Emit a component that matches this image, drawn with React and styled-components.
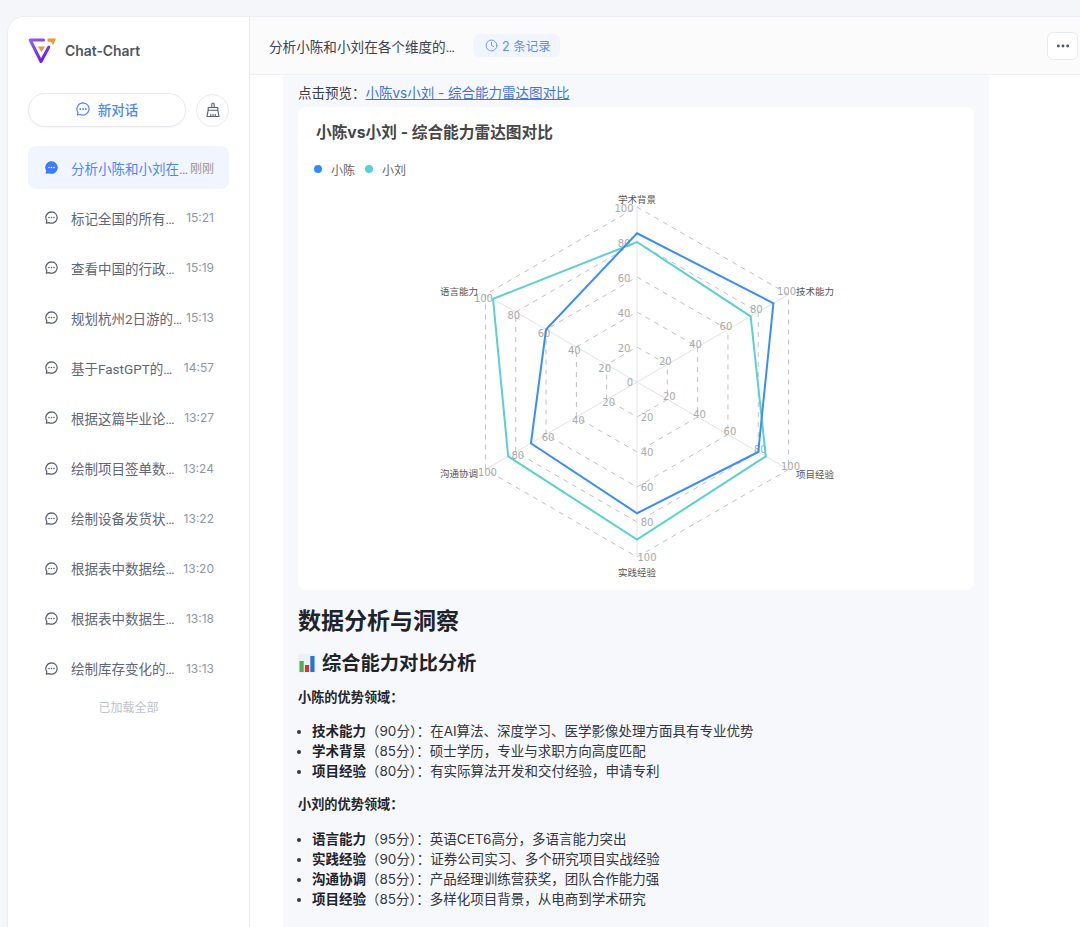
import React from 'react'
import styled, { createGlobalStyle } from 'styled-components'
import { Clock, MoreHorizontal } from 'lucide-react'

const GlobalStyle = createGlobalStyle`
  html, body {
    margin: 0;
    height: 927px;
    overflow: hidden;
    background: #f4f6f9;
    font-family: Inter, "Noto Sans CJK SC", "Noto Sans", sans-serif;
  }
`

const Page = styled.div`
  padding: 17px 0 0 8px;
`

const Shell = styled.div`
  display: flex;
  height: 920px;
  background: #fff;
  border-top-left-radius: 16px;
  box-shadow: 0 0 0 1px #eceef3;
  overflow: hidden;
`

const Sidebar = styled.aside`
  width: 242px;
  flex: none;
  box-sizing: border-box;
  padding: 20px 20px 0;
  border-right: 1px solid #e9ebf0;
  background: #fff;
`

const Brand = styled.div`
  display: flex;
  align-items: center;
  gap: 9px;
  height: 28px;
  color: #4f5666;
  font-size: 13.9px;
  font-weight: 600;
`

const Actions = styled.div`
  display: flex;
  align-items: center;
  justify-content: space-between;
  height: 34px;
  margin-top: 28px;
`

const NewChat = styled.button`
  display: flex;
  align-items: center;
  justify-content: center;
  gap: 8px;
  width: 158px;
  height: 34px;
  padding: 0 0 2px;
  background: #fff;
  border: 1px solid #e8eaf0;
  border-radius: 17px;
  box-shadow: 0 1px 2px rgba(20, 30, 60, 0.04);
  color: #4f86ff;
  font: 500 13.5px Inter, "Noto Sans CJK SC", sans-serif;
`

const BroomButton = styled.button`
  display: flex;
  align-items: center;
  justify-content: center;
  width: 33px;
  height: 33px;
  padding: 0;
  background: #fff;
  border: 1px solid #e8eaf0;
  border-radius: 50%;
`

const ChatList = styled.div`
  display: flex;
  flex-direction: column;
  gap: 7.1px;
  margin-top: 19px;
`

const ChatRow = styled.div`
  display: flex;
  align-items: center;
  height: 43px;
  padding: 0 15px 0 17px;
  border-radius: 8px;
  background: ${p => (p.$active ? '#f1f5ff' : 'transparent')};
`

const ChatTitle = styled.span`
  flex: 1;
  min-width: 0;
  margin-left: 13px;
  overflow: hidden;
  white-space: nowrap;
  text-overflow: ellipsis;
  font-family: Roboto, "Noto Sans CJK SC", sans-serif;
  font-size: 13.5px;
  color: ${p => (p.$active ? '#4f86ff' : '#60677a')};
`

const ChatTime = styled.span`
  flex: none;
  font-size: 12px;
  color: #8f96a6;
`

const LoadedAll = styled.div`
  margin-top: 1px;
  text-align: center;
  font-size: 12px;
  color: #c0c3ca;
`

const Main = styled.main`
  flex: 1;
  min-width: 0;
  display: flex;
  flex-direction: column;
`

const Header = styled.header`
  display: flex;
  align-items: center;
  height: 58px;
  flex: none;
  box-sizing: border-box;
  padding: 0 2px 0 19px;
  background: #fbfbfc;
  border-bottom: 1px solid #eff0f4;
`

const HeaderTitle = styled.div`
  width: 187px;
  overflow: hidden;
  white-space: nowrap;
  text-overflow: ellipsis;
  font-family: Roboto, "Noto Sans CJK SC", sans-serif;
  font-size: 13.6px;
  color: #3d4250;
`

const RecordBadge = styled.div`
  display: flex;
  align-items: center;
  gap: 4px;
  height: 23px;
  margin-left: 17px;
  padding: 0 9px 0 12px;
  background: #f1f5ff;
  border-radius: 6px;
  color: #5b8dff;
  font-size: 12.5px;
`

const MoreButton = styled.button`
  display: flex;
  align-items: center;
  justify-content: center;
  width: 31px;
  height: 28px;
  margin-left: auto;
  padding: 0;
  background: #fff;
  border: 1px solid #e8eaf0;
  border-radius: 6px;
  color: #4f5666;
`

const Content = styled.div`
  flex: 1;
  width: 706px;
  box-sizing: border-box;
  margin-left: 33px;
  padding: 8px 15px 0;
  background: #f7f8fb;
  color: #24272e;
`

const PreviewLine = styled.div`
  height: 20px;
  line-height: 20px;
  font-size: 13.5px;
  color: #3c4048;
  a {
    color: #3f74e0;
    text-decoration: underline;
  }
`

const ChartCard = styled.section`
  margin-top: 4px;
  height: 483px;
  background: #fff;
  border-radius: 8px;
`

const ChartTitle = styled.div`
  padding: 16px 18px 0;
  line-height: 20px;
  font-size: 15.7px;
  font-weight: 700;
  color: #464646;
`

const Legend = styled.div`
  display: flex;
  align-items: center;
  height: 16px;
  margin: 18px 0 0 16px;
`

const LegendItem = styled.span`
  display: flex;
  align-items: center;
  gap: 9px;
  margin-right: 10px;
  font-size: 12px;
  color: #666;
  &::before {
    content: '';
    width: 8px;
    height: 8px;
    border-radius: 50%;
    background: ${p => p.$color};
  }
`

const RadarSvg = styled.svg`
  display: block;
  width: 676px;
  height: 400px;
  margin-top: 8px;
`

const H1 = styled.h1`
  margin: 15px 0 0;
  line-height: 32px;
  font-size: 23px;
  font-weight: 600;
  color: #1f232b;
`

const H2 = styled.h2`
  display: flex;
  align-items: center;
  gap: 6px;
  margin: 12px 0 0;
  line-height: 28px;
  font-size: 19.3px;
  font-weight: 600;
  color: #1f232b;
`

const Lead = styled.p`
  margin: ${p => (p.$first ? '10px 0 0' : '13px 0 15px')};
  line-height: 20px;
  font-size: 13.2px;
  font-weight: 600;
  color: #24272e;
`

const Points = styled.ul`
  margin: 14px 0 0;
  padding: 0 0 0 14px;
  list-style: disc;
  li {
    line-height: 20px;
    font-size: 13.5px;
    color: #33373f;
  }
  b {
    font-weight: 600;
    color: #1f232b;
  }
`

// fullwidth punctuation, as in the source text
const COLON = '\uFF1A'
const COMMA = '\uFF0C'
const score = n => `\uFF08${n}分\uFF09${COLON}`

const chats = [
  ['分析小陈和小刘在各个维度的表现', '刚刚'],
  ['标记全国的所有省会城市', '15:21'],
  ['查看中国的行政区划图', '15:19'],
  ['规划杭州2日游的详细行程', '15:13'],
  ['基于FastGPT的知识库问答', '14:57'],
  ['根据这篇毕业论文绘制图表', '13:27'],
  ['绘制项目签单数据图表', '13:24'],
  ['绘制设备发货状态图表', '13:22'],
  ['根据表中数据绘制图表', '13:20'],
  ['根据表中数据生成图表', '13:18'],
  ['绘制库存变化的折线图', '13:13'],
]

const chenPoints = [
  ['技术能力', 90, '在AI算法、深度学习、医学影像处理方面具有专业优势'],
  ['学术背景', 85, `硕士学历${COMMA}专业与求职方向高度匹配`],
  ['项目经验', 80, `有实际算法开发和交付经验${COMMA}申请专利`],
]

const liuPoints = [
  ['语言能力', 95, `英语CET6高分${COMMA}多语言能力突出`],
  ['实践经验', 90, '证券公司实习、多个研究项目实战经验'],
  ['沟通协调', 85, `产品经理训练营获奖${COMMA}团队合作能力强`],
  ['项目经验', 85, `多样化项目背景${COMMA}从电商到学术研究`],
]

// radar geometry, in page coordinates
const CX = 637
const CY = 382
const R = 175
const angles = [-90, -30, 30, 90, 150, 210].map(a => (a * Math.PI) / 180)
const at = (axis, value) => [
  CX + Math.cos(angles[axis]) * R * (value / 100),
  CY + Math.sin(angles[axis]) * R * (value / 100),
]
const poly = values => values.map((v, i) => at(i, v).join(',')).join(' ')

const tickOffsets = [
  [-13, 1],
  [-2, -3],
  [2, -3],
  [10, 0],
  [2, 3],
  [-2, 3.5],
]

const axisNames = [
  ['学术背景', 637, 199, 'middle'],
  ['技术能力', 796, 291, 'start'],
  ['项目经验', 796, 474, 'start'],
  ['实践经验', 637, 572, 'middle'],
  ['沟通协调', 478, 473, 'end'],
  ['语言能力', 478, 291, 'end'],
]

const ChatIcon = ({ active }) => (
  <svg width="13" height="13" viewBox="0 0 14 14" style={{ flex: 'none' }}>
    <path
      d="M7 .9a6.1 6.1 0 1 1-2.7 11.6L1.4 13l.6-2.6A6.1 6.1 0 0 1 7 .9z"
      fill={active ? '#3d7bff' : 'none'}
      stroke={active ? '#3d7bff' : '#596074'}
      strokeWidth="1.3"
      strokeLinejoin="round"
    />
    <g fill={active ? '#fff' : '#596074'}>
      <circle cx="4.3" cy="7" r=".9" />
      <circle cx="7" cy="7" r=".9" />
      <circle cx="9.7" cy="7" r=".9" />
    </g>
  </svg>
)

const Logo = () => (
  <svg width="28" height="28" viewBox="0 0 28 28">
    <defs>
      <linearGradient id="logoPurple" x1="0" y1="0" x2="0.6" y2="1">
        <stop offset="0" stopColor="#8a5cff" />
        <stop offset="1" stopColor="#6a1ff0" />
      </linearGradient>
    </defs>
    <path
      d="M15.5 3H2.2L13 24.5 20.8 10"
      fill="none"
      stroke="url(#logoPurple)"
      strokeWidth="3"
      strokeLinejoin="round"
      strokeLinecap="round"
    />
    <path d="M19.5 1.5H28l-3 6.5-2-3.2h-3.5z" fill="#f7932e" />
    <path d="M9.8 9.5h7.2L13.4 15z" fill="#f7932e" />
  </svg>
)

const BroomIcon = () => (
  <svg width="16" height="16" viewBox="0 0 16 16" fill="none" stroke="#5a6072" strokeWidth="1.1" strokeLinejoin="round" strokeLinecap="round">
    <path d="M6.8 5.5V2.2a1.2 1.2 0 0 1 2.4 0v3.3" />
    <path d="M3.2 8.2V5.5h9.6v2.7" />
    <path d="M3.2 8.2 2 14.5h12l-1.2-6.3z" />
    <path d="M5.8 14.5v-2.3M8 14.5v-2.3M10.2 14.5v-2.3" />
  </svg>
)

const BarChartEmoji = () => (
  <svg width="18" height="19" viewBox="0 0 18 19">
    <rect width="18" height="19" rx="1.5" fill="#eef1f4" />
    <rect x="1.5" y="7" width="4.2" height="11" fill="#4caf50" />
    <rect x="6.9" y="11" width="4.2" height="7" fill="#d8322a" />
    <rect x="12.3" y="2" width="4.2" height="16" fill="#1e78d6" />
  </svg>
)

const Radar = () => (
  <RadarSvg viewBox="298 185 676 400">
    {[20, 40, 60, 80, 100].map(v => (
      <polygon
        key={v}
        points={poly([v, v, v, v, v, v])}
        fill="none"
        stroke="#c2c2c2"
        strokeWidth="1"
        strokeDasharray="5 5"
      />
    ))}
    {angles.map((_, i) => {
      const [x, y] = at(i, 100)
      return <line key={i} x1={CX} y1={CY} x2={x} y2={y} stroke="#e3e3e3" strokeWidth="1" />
    })}
    <g fontSize="10" fill="#aaa" fontFamily='"DejaVu Sans", sans-serif' dominantBaseline="central">
      <text x="630" y="382" textAnchor="middle">0</text>
      {angles.map((_, i) =>
        [20, 40, 60, 80, 100].map(v => {
          const [x, y] = at(i, v)
          const [dx, dy] = tickOffsets[i]
          return (
            <text key={`${i}-${v}`} x={x + dx} y={y + dy} textAnchor="middle">
              {v}
            </text>
          )
        })
      )}
    </g>
    <polygon points={poly([80, 75, 85, 90, 85, 95])} fill="none" stroke="#5bd1cf" strokeWidth="2" />
    <polygon points={poly([85, 90, 80, 75, 70, 60])} fill="none" stroke="#3a8dff" strokeWidth="2" />
    <g fontSize="9.5" fill="#555" dominantBaseline="central">
      {axisNames.map(([name, x, y, anchor]) => (
        <text key={name} x={x} y={y} textAnchor={anchor}>
          {name}
        </text>
      ))}
    </g>
  </RadarSvg>
)

const PointList = ({ items }) => (
  <Points>
    {items.map(([name, points, text]) => (
      <li key={name + points}>
        <b>{name}</b>
        {score(points)}
        {text}
      </li>
    ))}
  </Points>
)

const App = () => {
  return (
    <Page>
      <GlobalStyle />
      <Shell>
        <Sidebar>
          <Brand>
            <Logo />
            <span>Chat-Chart</span>
          </Brand>
          <Actions>
            <NewChat>
              <svg width="14" height="14" viewBox="0 0 14 14">
                <path d="M7 .9a6.1 6.1 0 1 1-2.7 11.6L1.4 13l.6-2.6A6.1 6.1 0 0 1 7 .9z" fill="none" stroke="#4f86ff" strokeWidth="1.2" strokeLinejoin="round" />
                <g fill="#4f86ff">
                  <circle cx="4.3" cy="7" r=".9" />
                  <circle cx="7" cy="7" r=".9" />
                  <circle cx="9.7" cy="7" r=".9" />
                </g>
              </svg>
              新对话
            </NewChat>
            <BroomButton>
              <BroomIcon />
            </BroomButton>
          </Actions>
          <ChatList>
            {chats.map(([title, time], i) => (
              <ChatRow key={title} $active={i === 0}>
                <ChatIcon active={i === 0} />
                <ChatTitle $active={i === 0}>{title}</ChatTitle>
                <ChatTime>{time}</ChatTime>
              </ChatRow>
            ))}
            <LoadedAll>已加载全部</LoadedAll>
          </ChatList>
        </Sidebar>
        <Main>
          <Header>
            <HeaderTitle>分析小陈和小刘在各个维度的表现对比</HeaderTitle>
            <RecordBadge>
              <Clock size={13} strokeWidth={1.6} />
              2 条记录
            </RecordBadge>
            <MoreButton>
              <MoreHorizontal size={16} strokeWidth={2.4} />
            </MoreButton>
          </Header>
          <Content>
            <PreviewLine>
              点击预览{COLON}<a href="#preview">小陈vs小刘 - 综合能力雷达图对比</a>
            </PreviewLine>
            <ChartCard>
              <ChartTitle>小陈vs小刘 - 综合能力雷达图对比</ChartTitle>
              <Legend>
                <LegendItem $color="#2f8bff">小陈</LegendItem>
                <LegendItem $color="#5bd1cf">小刘</LegendItem>
              </Legend>
              <Radar />
            </ChartCard>
            <H1>数据分析与洞察</H1>
            <H2>
              <BarChartEmoji />
              综合能力对比分析
            </H2>
            <Lead $first>小陈的优势领域{COLON}</Lead>
            <PointList items={chenPoints} />
            <Lead>小刘的优势领域{COLON}</Lead>
            <PointList items={liuPoints} />
          </Content>
        </Main>
      </Shell>
    </Page>
  )
}

export default App
